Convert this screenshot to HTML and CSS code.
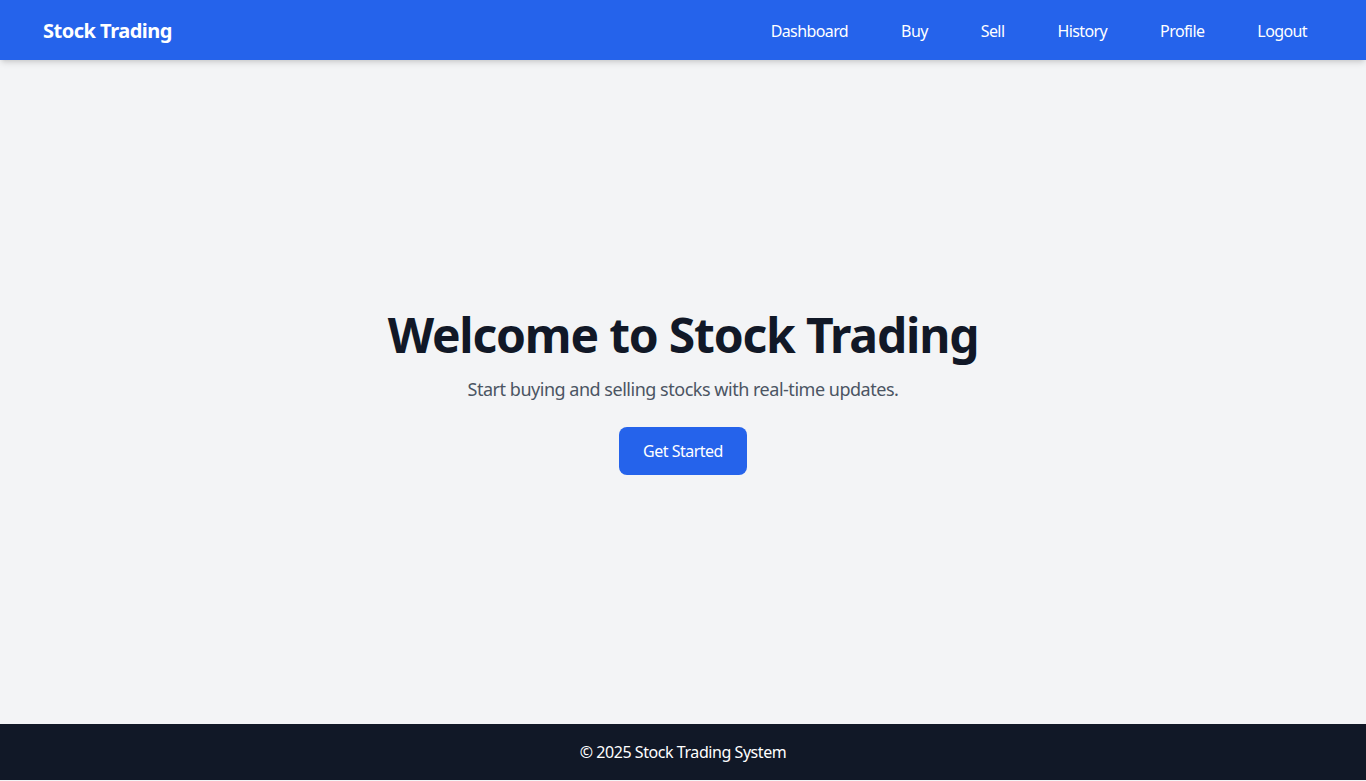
FILE: index.html
```html
<!DOCTYPE html>
<html lang="en">
<head>
<meta charset="utf-8">
<title>Stock Trading</title>
<link rel="stylesheet" href="styles.css">
</head>
<body>
<div class="page">
  <header class="navbar">
    <div class="brand">Stock Trading</div>
    <nav class="links">
      <a href="#">Dashboard</a>
      <a href="#">Buy</a>
      <a href="#">Sell</a>
      <a href="#">History</a>
      <a href="#">Profile</a>
      <a href="#">Logout</a>
    </nav>
  </header>
  <main class="hero">
    <h1 class="title">Welcome to Stock Trading</h1>
    <p class="subtitle">Start buying and selling stocks with real-time updates.</p>
    <a class="cta" href="#">Get Started</a>
  </main>
  <footer class="footer">© 2025 Stock Trading System</footer>
</div>
</body>
</html>
```
FILE: styles.css
```css
* { box-sizing: border-box; }
html, body { margin: 0; padding: 0; }
body {
  font-family: "Segoe UI", "Noto Sans", "Open Sans", sans-serif;
  background: #f3f4f6;
  color: #111827;
}
.page {
  display: flex;
  flex-direction: column;
  height: 780px;
}
.navbar {
  height: 60px;
  flex: none;
  background: #2563eb;
  color: #fff;
  display: flex;
  align-items: center;
  justify-content: space-between;
  padding: 0 43px;
  box-shadow: 0 4px 6px -1px rgba(0,0,0,0.12), 0 2px 4px -2px rgba(0,0,0,0.1);
  position: relative;
  z-index: 1;
}
.brand {
  font-size: 20px;
  font-weight: 700;
  line-height: 28px;
  letter-spacing: -0.5px;
  padding-top: 2px;
}
.links {
  display: flex;
  gap: 21px;
  padding-top: 1px;
}
.links a {
  color: #fff;
  text-decoration: none;
  font-size: 16px;
  line-height: 24px;
  letter-spacing: -0.6px;
  padding: 0 16px;
}
.hero {
  flex: 1;
  display: flex;
  flex-direction: column;
  align-items: center;
  justify-content: center;
  padding-top: 1px;
}
.title {
  margin: 0 0 16px;
  font-size: 48px;
  line-height: 48px;
  font-weight: 700;
  letter-spacing: -1.2px;
  color: #111827;
}
.subtitle {
  margin: 0 0 24px;
  font-size: 18px;
  line-height: 28px;
  letter-spacing: -0.48px;
  color: #4b5563;
}
.cta {
  display: block;
  background: #2563eb;
  color: #fff;
  text-decoration: none;
  font-size: 16px;
  line-height: 24px;
  letter-spacing: -0.5px;
  padding: 12px 24px;
  border-radius: 8px;
}
.footer {
  flex: none;
  height: 56px;
  background: #111827;
  color: #fff;
  display: flex;
  align-items: center;
  justify-content: center;
  font-size: 16px;
  letter-spacing: -0.44px;
}
```
